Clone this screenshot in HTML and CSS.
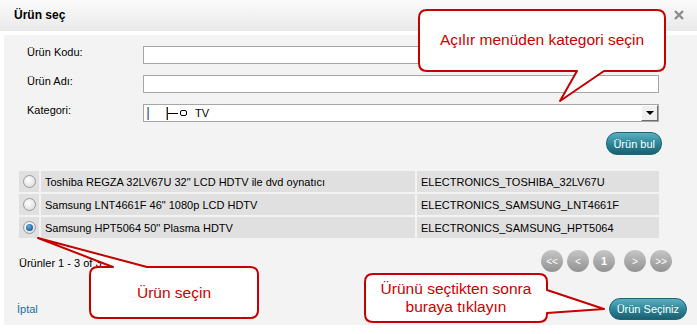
FILE: index.html
```html
<!DOCTYPE html>
<html lang="tr">
<head>
  <meta charset="UTF-8" />
  <title>Ürün seç</title>
  <link rel="stylesheet" href="styles.css">
</head>
<body>
  <div class="dialog">
    <header class="dlg-head">
      <span class="dlg-title">Ürün seç</span>
      <svg class="close" width="10" height="10" viewBox="0 0 10 10">
        <path d="M1 1 L9 9 M9 1 L1 9" stroke="#8c8c8c" stroke-width="2.4" />
      </svg>
    </header>

    <div class="dlg-body">
      <div class="form">
        <label>Ürün Kodu:</label>
        <input class="field" type="text">
        <label>Ürün Adı:</label>
        <input class="field" type="text">
        <label>Kategori:</label>
        <div class="select">
          <span class="tree">
            <span class="tree-bar"></span>
            <span class="tree-bar second"></span>
            <span class="tree-line"></span>
            <span class="tree-node"></span>
            <span class="tree-text">TV</span>
          </span>
          <span class="sel-arrow"></span>
        </div>
      </div>

      <div class="find-row">
        <button class="btn">Ürün bul</button>
      </div>

      <div class="results">
        <div class="cell radio-cell"><span class="radio"></span></div>
        <div class="cell">Toshiba REGZA 32LV67U 32" LCD HDTV ile dvd oynatıcı</div>
        <div class="cell">ELECTRONICS_TOSHIBA_32LV67U</div>

        <div class="cell radio-cell"><span class="radio"></span></div>
        <div class="cell">Samsung LNT4661F 46" 1080p LCD HDTV</div>
        <div class="cell">ELECTRONICS_SAMSUNG_LNT4661F</div>

        <div class="cell radio-cell"><span class="radio checked"></span></div>
        <div class="cell">Samsung HPT5064 50" Plasma HDTV</div>
        <div class="cell">ELECTRONICS_SAMSUNG_HPT5064</div>
      </div>

      <div class="pager-row">
        <span class="count">Ürünler 1 - 3 of 3</span>
        <div class="pager">
          <span class="pg">&lt;&lt;</span>
          <span class="pg">&lt;</span>
          <span class="pg current">1</span>
          <span class="pg next">&gt;</span>
          <span class="pg">&gt;&gt;</span>
        </div>
      </div>

      <div class="foot">
        <a class="cancel" href="#">İptal</a>
        <button class="btn">Ürün Seçiniz</button>
      </div>
    </div>
  </div>

  <!-- help callouts drawn over the dialog -->
  <svg class="callouts" width="697" height="334" viewBox="0 0 697 334">
    <path d="M427 10 H657 Q665 10 665 18 V63 Q665 71 657 71 H604 L560 101 L577 71 H427 Q419 71 419 63 V18 Q419 10 427 10 Z" />
    <path d="M98 267 H113 L38 238 L147 267 H250 Q258 267 258 275 V310 Q258 318 250 318 H98 Q90 318 90 310 V275 Q90 267 98 267 Z" />
    <path d="M373 274 H539 Q547 274 547 282 V290 L604 309 L547 313 V314 Q547 322 539 322 H373 Q365 322 365 314 V282 Q365 274 373 274 Z" />
  </svg>
  <div class="note note-cat">Açılır menüden kategori seçin</div>
  <div class="note note-pick">Ürün seçin</div>
  <div class="note note-save">Ürünü seçtikten sonra<br>buraya tıklayın</div>
</body>
</html>
```

FILE: styles.css
```css
body {
  font-family: 'Liberation Sans', Arial, sans-serif;
  font-size: 11px;
  color: #000;
  background-color: #ffffff;
  margin: 0;
  width: 697px;
  height: 334px;
  position: relative;
  overflow: hidden;
}

.dlg-head {
  display: flex;
  align-items: center;
  justify-content: space-between;
  height: 31px;
  padding: 0 13px 0 14px;
  background: linear-gradient(#fbfbfb, #e9e9e9);
}

.dlg-title {
  font-size: 12px;
  font-weight: bold;
  margin-top: -1px;
}

.close {
  margin-bottom: 1px;
}

.dlg-body {
  margin: 4px 0 0 4px;
  height: 279px;
  padding: 11px 10px 0 13px;
  background-color: #f3f3f3;
}

.form {
  display: grid;
  grid-template-columns: 116px 516px;
  row-gap: 11px;
  margin-left: 10px;
}

.form label {
  line-height: 13px;
}

.field {
  display: block;
  width: 100%;
  height: 18px;
  box-sizing: border-box;
  border: 1px solid #a6a6a6;
  background-color: #fff;
  padding: 0 3px;
  margin: 0;
  outline: none;
}

.select {
  position: relative;
  height: 18px;
  box-sizing: border-box;
  border: 1px solid #a6a6a6;
  background-color: #fff;
}

.tree {
  display: flex;
  align-items: center;
  height: 100%;
  padding-left: 3px;
}

.tree-bar {
  width: 1px;
  height: 13px;
  border-left: 1px solid #d39a62;
  background-color: #3c8fe6;
}

.tree-bar.second {
  margin-left: 17px;
  background-color: #1f2f4a;
}

.tree-line {
  width: 10px;
  height: 1px;
  background-color: #000;
}

.tree-node {
  width: 5px;
  height: 4px;
  margin-left: 2px;
  border: 1px solid #000;
  border-radius: 2px;
}

.tree-text {
  margin-left: 8px;
  font-size: 11px;
}

.sel-arrow {
  position: absolute;
  top: 0;
  right: 0;
  width: 17px;
  height: 16px;
  box-sizing: border-box;
  background-color: #f0f0f0;
  border-top: 1px solid #fff;
  border-left: 1px solid #fff;
  border-right: 1px solid #6e6e6e;
  border-bottom: 1px solid #6e6e6e;
}

.sel-arrow::after {
  content: "";
  position: absolute;
  left: 4px;
  top: 5px;
  border-left: 4px solid transparent;
  border-right: 4px solid transparent;
  border-top: 4px solid #000;
}

.find-row {
  display: flex;
  justify-content: flex-end;
  margin: 10px 25px 0 0;
}

.btn {
  font-family: 'Liberation Sans', Arial, sans-serif;
  font-size: 11px;
  color: #fff;
  height: 23px;
  padding: 0 6px;
  border: 1px solid #1d6676;
  border-radius: 11px;
  background: linear-gradient(#5ab0c0, #2a8294 55%, #1a6070);
  cursor: pointer;
}

.results {
  display: grid;
  grid-template-columns: 20px 374px 242px;
  grid-auto-rows: 21px;
  gap: 2px;
  margin: 16px 28px 0 2px;
}

.cell {
  display: flex;
  align-items: center;
  padding-left: 4px;
  background-color: #e0e0e0;
  white-space: nowrap;
}

.radio-cell {
  padding-left: 0;
  justify-content: center;
}

.radio {
  position: relative;
  width: 13px;
  height: 13px;
  box-sizing: border-box;
  border: 1px solid #9a9a9a;
  border-radius: 50%;
  background: radial-gradient(circle at 40% 35%, #ffffff, #d6d6d6);
}

.radio.checked::after {
  content: "";
  position: absolute;
  left: 2px;
  top: 2px;
  width: 7px;
  height: 7px;
  border-radius: 50%;
  background: radial-gradient(circle at 40% 35%, #5fb0ee, #0a3f78);
}

.pager-row {
  display: flex;
  align-items: center;
  justify-content: space-between;
  margin: 12px 15px 0 2px;
}

.count {
  margin-top: 3px;
}

.pager {
  display: flex;
  gap: 4px;
}

.pg {
  display: flex;
  align-items: center;
  justify-content: center;
  width: 22px;
  height: 22px;
  border-radius: 50%;
  background: linear-gradient(#c6c6c6, #929292);
  color: #fff;
  font-size: 10px;
}

.pg.current {
  font-weight: bold;
  font-size: 11px;
}

.pg.next {
  margin-left: 5px;
}

.foot {
  display: flex;
  align-items: center;
  justify-content: space-between;
  margin-top: 26px;
}

.foot .btn {
  height: 22px;
  padding: 0 7px;
}

.cancel {
  color: #1c6ea4;
  text-decoration: none;
}

.callouts {
  position: absolute;
  top: 0;
  left: 0;
  pointer-events: none;
}

.callouts path {
  fill: #fff;
  stroke: #c40000;
  stroke-width: 2;
  stroke-linejoin: round;
}

.note {
  position: absolute;
  display: flex;
  align-items: center;
  justify-content: center;
  text-align: center;
  color: #cc0000;
  font-size: 15.5px;
  line-height: 18px;
}

.note-cat {
  left: 419px;
  top: 10px;
  width: 246px;
  height: 59px;
}

.note-pick {
  left: 90px;
  top: 268px;
  width: 168px;
  height: 50px;
}

.note-save {
  left: 365px;
  top: 274px;
  width: 182px;
  height: 48px;
}
```
